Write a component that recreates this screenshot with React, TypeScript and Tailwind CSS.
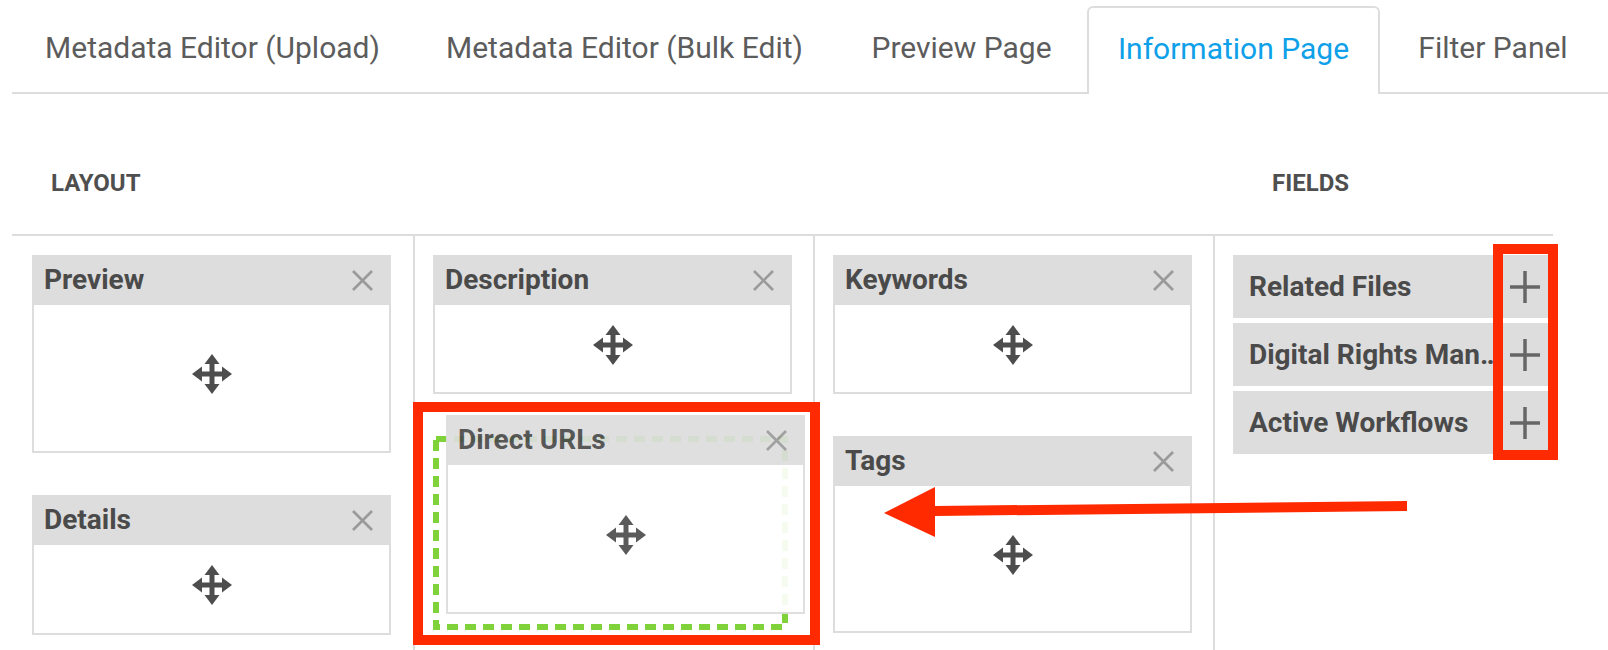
import React from "react";

const tabs = [
  { label: "Metadata Editor (Upload)", width: "w-[401px]" },
  { label: "Metadata Editor (Bulk Edit)", width: "w-[423px]" },
  { label: "Preview Page", width: "w-[251px]" },
  { label: "Information Page", width: "w-[293px]", active: true },
  { label: "Filter Panel", width: "w-[226px]" },
];

const MoveIcon = () => (
  <svg width="40" height="40" viewBox="0 0 40 40" fill="#4d4d4d">
    <rect x="8" y="17.5" width="24" height="5" />
    <rect x="17.5" y="8" width="5" height="24" />
    <polygon points="0,20 10,12.5 10,27.5" />
    <polygon points="40,20 30,12.5 30,27.5" />
    <polygon points="20,0 12.5,10 27.5,10" />
    <polygon points="20,40 12.5,30 27.5,30" />
  </svg>
);

const CloseIcon = () => (
  <svg width="21" height="21" viewBox="0 0 21 21" stroke="#9a9a9a" strokeWidth="2.6">
    <line x1="1" y1="1" x2="20" y2="20" />
    <line x1="20" y1="1" x2="1" y2="20" />
  </svg>
);

const PlusIcon = () => (
  <svg width="30" height="32" viewBox="0 0 30 32" stroke="#666666" strokeWidth="3.5">
    <line x1="0" y1="16" x2="30" y2="16" />
    <line x1="15" y1="0" x2="15" y2="32" />
  </svg>
);

// one widget card in the layout grid
const Card = ({ title, bodyH }: { title: string; bodyH: string }) => (
  <div className="w-[359px] border-2 border-[#dddddd] bg-white">
    <div className="-mx-[2px] -mt-[2px] flex h-[50px] items-center justify-between bg-[#dddddd] pl-[12px] pr-[18px]">
      <span className="text-[28px] font-bold leading-none text-[#4a4a4a]">{title}</span>
      <CloseIcon />
    </div>
    <div className={`flex items-center justify-center pb-[8px] ${bodyH}`}>
      <MoveIcon />
    </div>
  </div>
);

const fields = ["Related Files", "Digital Rights Management", "Active Workflows"];

const App = () => {
  return (
    <div
      className="relative h-[650px] w-[1608px] overflow-hidden bg-white"
      style={{ fontFamily: "Roboto, 'Liberation Sans', sans-serif" }}
    >
      {/* tabs */}
      <div className="ml-[12px] flex h-[94px] items-end border-b-2 border-[#dddddd]">
        {tabs.map((tab) => (
          <div
            key={tab.label}
            className={`${tab.width} -mb-[2px] flex h-[88px] items-center justify-center pb-[4px] text-[30px] leading-none ${
              tab.active
                ? "rounded-t-[6px] border-2 border-b-0 border-[#dddddd] bg-white text-[#0ea0e8]"
                : "text-[#5c5c5c]"
            }`}
          >
            {tab.label}
          </div>
        ))}
      </div>

      {/* section headings */}
      <div className="ml-[12px] flex h-[142px] w-[1541px] border-b-2 border-[#dddddd] pt-[77px] text-[24px] font-bold leading-none text-[#4f4f4f]">
        <div className="w-[1201px] pl-[39px]">LAYOUT</div>
        <div className="pl-[59px]">FIELDS</div>
      </div>

      {/* columns */}
      <div className="ml-[12px] grid h-[420px] grid-cols-[401px_400px_400px_340px]">
        <div className="flex flex-col gap-[42px] pl-[20px] pt-[19px]">
          <Card title="Preview" bodyH="h-[146px]" />
          <Card title="Details" bodyH="h-[88px]" />
        </div>
        <div className="flex flex-col border-l-2 border-[#dddddd] pl-[18px] pt-[19px]">
          <Card title="Description" bodyH="h-[87px]" />
          <div className="mt-[42px] h-[194px] w-[355px]">
            <svg width="355" height="194" viewBox="0 0 355 194">
              <rect
                x="3"
                y="3"
                width="349"
                height="188"
                fill="none"
                stroke="#80d23a"
                strokeWidth="6"
                strokeDasharray="11 7"
              />
            </svg>
          </div>
        </div>
        <div className="flex flex-col gap-[42px] border-l-2 border-[#dddddd] pl-[18px] pt-[19px]">
          <Card title="Keywords" bodyH="h-[87px]" />
          <Card title="Tags" bodyH="h-[145px]" />
        </div>
        <div className="flex flex-col gap-[5px] border-l-2 border-[#dddddd] pl-[18px] pt-[19px]">
          {fields.map((f) => (
            <div key={f} className="flex h-[63px] w-[315px] items-center bg-[#dddddd] pl-[16px] pr-[8px]">
              <span className="flex-1 truncate text-[28px] font-bold leading-normal text-[#4a4a4a]">{f}</span>
              <span className="ml-[2px] flex">
                <PlusIcon />
              </span>
            </div>
          ))}
        </div>
      </div>

      {/* card being dragged */}
      <div className="absolute left-[446px] top-[415px] opacity-[0.92]">
        <Card title="Direct URLs" bodyH="h-[147px]" />
      </div>

      {/* annotations */}
      <div className="absolute left-[413px] top-[402px] h-[243px] w-[407px] border-[10px] border-[#ff2a00]" />
      <div className="absolute left-[1493px] top-[244px] h-[216px] w-[65px] border-[10px] border-[#ff2a00]" />
      <svg className="absolute left-[880px] top-[480px]" width="530" height="60" viewBox="0 0 530 60">
        <polygon points="527,21 527,31 55,36 55,26" fill="#ff2a00" />
        <polygon points="4,33 55,7 55,57" fill="#ff2a00" />
      </svg>
    </div>
  );
};

export default App;
